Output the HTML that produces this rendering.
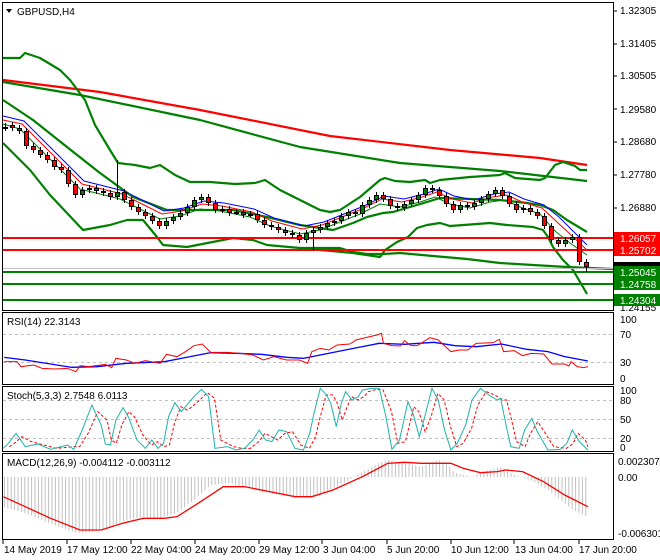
<!DOCTYPE html>
<html><head><meta charset="utf-8">
<style>
html,body{margin:0;padding:0;background:#fff;}
svg{display:block;font-family:"Liberation Sans",sans-serif;font-size:10px;}
.ns{vector-effect:non-scaling-stroke;fill:none;}
</style></head>
<body>
<svg width="660" height="560" viewBox="0 0 660 560" xmlns="http://www.w3.org/2000/svg">
<defs>
<pattern id="vl" x="0.5" y="0" width="3.4" height="10" patternUnits="userSpaceOnUse">
<rect x="0" y="0" width="1" height="10" fill="#c0c0c0"/>
</pattern>
</defs>
<rect width="660" height="560" fill="#fff"/>
<g fill="none" stroke="#000" stroke-width="1">
<rect x="2.5" y="2.5" width="611" height="308"/>
<rect x="2.5" y="312.5" width="611" height="72"/>
<rect x="2.5" y="386.5" width="611" height="65"/>
<rect x="2.5" y="453.5" width="611" height="86"/>
</g>
<g fill="none" stroke-width="2.2" stroke-linejoin="round">
<polyline stroke="#ff0000" points="3,80 100,92 200,110 330,136 450,150 540,158 587,165"/>
<polyline stroke="#008000" points="3,82 80,95 200,120 300,147 400,163 500,171 587,181"/>
<polyline stroke="#008000" points="3,58 20,58 25,53 40,58 60,70 70,80 85,100 95,125 110,150 118,163 135,165 150,168 160,165 175,175 190,182 210,182 235,184 255,183 265,180 280,190 300,200 320,210 330,212 340,210 360,197 380,180 385,178 395,181 410,182 425,180 430,183 440,180 470,177 500,175 505,173 515,178 540,180 545,178 555,165 563,162 575,166 580,170 587,170"/>
<polyline stroke="#008000" points="3,100 33,120 67,147 100,173 133,197 167,210 200,210 233,210 267,217 300,225 320,228 333,230 353,223 367,217 383,213 393,212 410,207 427,202 440,198 500,200 527,203 540,205 553,210 567,220 587,232"/>
<polyline stroke="#008000" points="3,143 30,170 50,195 83,230 110,225 127,220 143,220 157,237 163,245 187,247 233,238 253,240 267,245 300,248 353,253 380,257 385,250 397,242 408,237 417,228 427,225 440,223 450,226 477,224 490,223 507,225 533,227 543,230 548,237 553,247 563,260 573,270 583,287 587,294"/>
<polyline stroke="#008000" points="300,248 340,248 353,252 367,254 383,254 400,253 433,256 467,259 500,263 533,265 567,267 613,269"/>
</g>
<line x1="3" y1="268.5" x2="613" y2="268.5" stroke="#c0c0c0" stroke-width="1"/>
<g stroke-width="2">
<line x1="3" y1="238" x2="613" y2="238" stroke="#ff0000"/>
<line x1="3" y1="250" x2="613" y2="250" stroke="#ff0000"/>
<line x1="3" y1="272" x2="613" y2="272" stroke="#008000"/>
<line x1="3" y1="284" x2="613" y2="284" stroke="#008000"/>
<line x1="3" y1="300" x2="613" y2="300" stroke="#008000"/>
</g>
<!-- thin MAs -->
<g fill="none" stroke-width="1">
<polyline stroke="#008000" points="3,124 20,129 40,149 60,169 80,189 100,194 120,199 140,209 160,219 180,216 200,209 220,211 250,217 270,226 300,234 320,230 340,222 360,214 380,204 400,207 420,202 435,197 450,204 470,208 490,202 505,200 520,207 540,214 555,231 570,243 587,255"/>
<polyline stroke="#ff0000" points="3,120 22,124 42,144 62,164 82,184 102,189 122,194 142,204 162,214 182,211 202,204 222,206 252,212 272,221 302,229 322,225 342,217 362,209 382,199 402,202 422,197 437,192 452,199 472,203 492,197 507,195 522,202 542,208 557,222 572,236 587,250"/>
<polyline stroke="#0000ff" points="3,116 24,121 44,141 64,161 84,181 104,186 124,191 144,201 164,211 184,208 204,201 224,203 254,209 274,218 304,226 324,222 344,214 364,206 384,196 404,199 424,194 439,189 454,196 474,200 494,194 509,192 524,199 544,205 559,217 574,232 587,245"/>
</g>
<!-- candles -->
<path fill="none" stroke="#000" stroke-width="1" d="M5.5,123V131M12.5,122V131M19.5,125V134M26.5,128V149M33.5,143V153M40.5,147V158M47.5,152V163M54.5,157V170M61.5,164V173M68.5,167V187M75.5,181V198M82.5,187V198M89.5,185V193M96.5,185V194M103.5,188V196M110.5,190V200M117.5,160V200M124.5,189V203M131.5,197V210M138.5,204V215M145.5,209V219M152.5,213V224M159.5,218V229M166.5,218V229M173.5,214V224M180.5,210V220M187.5,204V216M194.5,197V210M201.5,194V203M208.5,194V206M215.5,200V213M222.5,206V213M229.5,206V216M236.5,209V215M243.5,209V218M250.5,211V217M257.5,211V223M264.5,217V228M271.5,222V230M278.5,224V233M285.5,227V236M292.5,230V238M299.5,232V243M306.5,230V243M313.5,227V250M320.5,224V233M327.5,220V230M334.5,218V226M341.5,213V224M348.5,209V219M355.5,209V217M362.5,202V217M369.5,197V208M376.5,192V203M383.5,192V202M390.5,196V209M397.5,203V211M404.5,201V211M411.5,197V207M418.5,192V203M425.5,185V198M432.5,185V193M439.5,187V199M446.5,193V207M453.5,201V213M460.5,202V213M467.5,202V210M474.5,200V210M481.5,196V206M488.5,191V202M495.5,187V197M502.5,187V199M509.5,193V207M516.5,201V213M523.5,205V213M530.5,205V215M537.5,209V219M544.5,213V229M551.5,223V243M558.5,237V247M565.5,237V247M572.5,234V243M579.5,234V265M586.5,259V272"/>
<path fill="none" stroke="#000" stroke-width="5" d="M5.5,127V129M12.5,125V128M19.5,128V131M26.5,131V146M33.5,146V150M40.5,150V155M47.5,155V160M54.5,160V167M61.5,167V170M68.5,170V184M75.5,184V195M82.5,190V195M89.5,188V190M96.5,188V191M103.5,191V193M110.5,193V197M117.5,192V197M124.5,192V200M131.5,200V207M138.5,207V212M145.5,212V216M152.5,216V221M159.5,221V226M166.5,221V226M173.5,217V221M180.5,213V217M187.5,207V213M194.5,200V207M201.5,197V200M208.5,197V203M215.5,203V210M222.5,209V211M229.5,209V213M236.5,212V214M243.5,212V215M250.5,214V216M257.5,214V220M264.5,220V225M271.5,225V227M278.5,227V230M285.5,230V233M292.5,233V235M299.5,235V240M306.5,233V240M313.5,230V233M320.5,227V230M327.5,223V227M334.5,221V223M341.5,216V221M348.5,212V216M355.5,212V214M362.5,205V214M369.5,200V205M376.5,195V200M383.5,195V199M390.5,199V206M397.5,206V208M404.5,204V208M411.5,200V204M418.5,195V200M425.5,188V195M432.5,188V190M439.5,190V196M446.5,196V204M453.5,204V210M460.5,205V210M467.5,205V207M474.5,203V207M481.5,199V203M488.5,194V199M495.5,190V194M502.5,190V196M509.5,196V204M516.5,204V210M523.5,208V210M530.5,208V212M537.5,212V216M544.5,216V226M551.5,226V240M558.5,240V244M565.5,240V244M572.5,237V240M579.5,237V262M586.5,262V267"/>
<path fill="none" stroke="#ff0000" stroke-width="3" d="M12.5,126V127M19.5,129V130M26.5,132V145M33.5,147V149M40.5,151V154M47.5,156V159M54.5,161V166M61.5,168V169M68.5,171V183M75.5,185V194M96.5,189V190M103.5,192V192M110.5,194V196M124.5,193V199M131.5,201V206M138.5,208V211M145.5,213V215M152.5,217V220M159.5,222V225M208.5,198V202M215.5,204V209M229.5,210V212M243.5,213V214M257.5,215V219M264.5,221V224M271.5,226V226M278.5,228V229M285.5,231V232M292.5,234V234M299.5,236V239M355.5,213V213M383.5,196V198M390.5,200V205M397.5,207V207M432.5,189V189M439.5,191V195M446.5,197V203M453.5,205V209M467.5,206V206M502.5,191V195M509.5,197V203M516.5,205V209M530.5,209V211M537.5,213V215M544.5,217V225M551.5,227V239M558.5,241V243M579.5,238V261M586.5,263V266"/>
<path fill="none" stroke="#008000" stroke-width="3" d="M5.5,128V128M82.5,191V194M89.5,189V189M117.5,193V196M166.5,222V225M173.5,218V220M180.5,214V216M187.5,208V212M194.5,201V206M201.5,198V199M222.5,210V210M236.5,213V213M250.5,215V215M306.5,234V239M313.5,231V232M320.5,228V229M327.5,224V226M334.5,222V222M341.5,217V220M348.5,213V215M362.5,206V213M369.5,201V204M376.5,196V199M404.5,205V207M411.5,201V203M418.5,196V199M425.5,189V194M460.5,206V209M474.5,204V206M481.5,200V202M488.5,195V198M495.5,191V193M523.5,209V209M565.5,241V243M572.5,238V239"/>
<!-- title -->
<path d="M6,9 L12,9 L9,13 Z" fill="#000"/>
<text x="17" y="15" fill="#000">GBPUSD,H4</text>
<g fill="#000">
<text x="620" y="14">1.32305</text>
<text x="620" y="47">1.31405</text>
<text x="620" y="79">1.30505</text>
<text x="620" y="113">1.29580</text>
<text x="620" y="145">1.28680</text>
<text x="620" y="178">1.27780</text>
<text x="620" y="211">1.26880</text>
<text x="620" y="311">1.24155</text>
</g>
<g stroke="#000"><line x1="613" y1="11" x2="617" y2="11"/><line x1="613" y1="44" x2="617" y2="44"/><line x1="613" y1="76" x2="617" y2="76"/><line x1="613" y1="109" x2="617" y2="109"/><line x1="613" y1="142" x2="617" y2="142"/><line x1="613" y1="175" x2="617" y2="175"/><line x1="613" y1="208" x2="617" y2="208"/></g>
<rect x="614" y="262" width="46" height="8" fill="#000"/>
<rect x="614" y="232" width="46" height="12" fill="#ff0000"/>
<rect x="614" y="244" width="46" height="12" fill="#ff0000"/>
<rect x="614" y="266" width="46" height="12" fill="#008000"/>
<rect x="614" y="278" width="46" height="12" fill="#008000"/>
<rect x="614" y="294" width="46" height="12" fill="#008000"/>
<g fill="#fff">
<text x="620" y="242">1.26057</text>
<text x="620" y="254">1.25702</text>
<text x="620" y="276">1.25045</text>
<text x="620" y="288">1.24758</text>
<text x="620" y="304">1.24304</text>
</g>
<!-- RSI -->
<g stroke="#c0c0c0" stroke-dasharray="3,3"><line x1="3" y1="334.5" x2="613" y2="334.5"/><line x1="3" y1="362.5" x2="613" y2="362.5"/></g>
<text x="7" y="325">RSI(14) 22.3143</text>
<g fill="#000"><text x="620" y="323">100</text><text x="620" y="338">70</text><text x="620" y="366">30</text><text x="620" y="382">0</text></g>
<g transform="translate(0,300) scale(0.42141,0.33333)">
<polyline class="ns" stroke="#0000ff" stroke-width="1.3" points="10,172 60,180 120,192 170,202 230,200 300,190 390,185 430,175 500,158 560,160 620,163 680,172 720,175 760,165 800,155 860,140 900,130 960,133 1030,127 1080,137 1130,140 1190,132 1250,148 1300,155 1340,170 1395,183"/>
<polyline class="ns" stroke="#ff0000" stroke-width="1" points="10,185 40,185 50,200 80,195 100,205 130,207 160,205 180,215 190,197 210,200 240,195 250,193 265,203 275,175 300,180 320,190 345,182 380,190 395,163 420,170 440,155 460,137 480,132 500,157 540,157 570,160 600,165 625,180 650,170 680,180 710,180 730,190 740,155 760,145 780,150 800,135 830,132 845,120 870,112 895,105 905,100 910,130 930,137 950,138 960,122 975,137 990,137 1020,113 1040,120 1070,155 1090,150 1110,150 1130,130 1170,128 1185,118 1195,155 1220,152 1240,167 1260,160 1290,162 1310,192 1340,192 1350,198 1355,185 1370,200 1385,203 1395,200"/>
</g>
<!-- Stoch -->
<g stroke="#c0c0c0" stroke-dasharray="3,3"><line x1="3" y1="400.5" x2="613" y2="400.5"/><line x1="3" y1="419.5" x2="613" y2="419.5"/><line x1="3" y1="438.5" x2="613" y2="438.5"/></g>
<text x="7" y="399">Stoch(5,3,3) 2.7548 6.0113</text>
<g fill="#000"><text x="620" y="394">100</text><text x="620" y="404">80</text><text x="620" y="423">50</text><text x="620" y="442">20</text><text x="620" y="451">0</text></g>
<g transform="translate(0,300) scale(0.42141,0.33333)">
<polyline class="ns" stroke="#ff0000" stroke-width="1" stroke-dasharray="3,2" points="22,440 34,430 52,410 74,425 104,435 134,445 174,440 189,440 209,400 232,335 254,360 264,420 276,430 289,375 306,335 319,350 339,405 359,435 374,425 389,440 402,435 414,370 429,320 444,330 454,322 474,300 492,278 509,295 524,420 554,440 574,445 594,445 614,425 629,400 644,410 659,420 676,400 694,395 714,435 734,445 749,410 759,355 774,285 789,285 799,305 812,360 824,320 834,290 849,300 864,290 874,275 894,268 909,270 929,335 944,430 962,425 982,320 994,335 1009,395 1024,345 1039,280 1054,300 1069,380 1084,440 1099,430 1119,385 1134,315 1154,275 1174,285 1194,300 1202,300 1214,360 1226,425 1246,440 1259,400 1276,365 1289,390 1314,440 1344,445 1359,432 1372,400 1389,420 1395,440"/>
<polyline class="ns" stroke="#20b2aa" stroke-width="1" points="8,445 20,430 38,400 60,440 90,432 120,448 160,435 175,448 195,390 218,315 240,375 250,432 262,435 275,360 292,323 305,352 325,420 345,445 360,420 375,445 388,430 400,350 415,308 430,335 440,320 460,290 478,268 495,290 510,445 540,440 560,450 580,445 600,420 615,390 630,420 645,425 662,390 680,395 700,445 720,450 735,400 745,340 760,265 775,285 785,310 798,380 810,310 820,275 835,300 850,290 860,270 880,265 900,265 915,345 930,448 948,420 968,305 980,340 995,410 1010,340 1025,265 1040,300 1055,390 1070,450 1085,430 1105,375 1120,300 1140,265 1160,285 1180,300 1188,295 1200,370 1212,440 1232,445 1245,390 1262,355 1275,395 1300,450 1330,448 1345,430 1358,390 1375,425 1395,450"/>
</g>
<!-- MACD -->
<polygon fill="url(#vl)" points="4,477 4,507 25,513 42,520 59,527 76,533 93,532 110,527 126,520 143,517 160,518 177,513 194,500 211,485 228,483 244,487 261,492 278,495 295,497 312,497 329,490 346,482 362,472 379,463 388,460 405,463 421,467 438,460 447,463 455,473 472,477 489,470 501,467 514,475 531,480 548,490 561,500 573,510 588,517 588,477"/>
<text x="7" y="466">MACD(12,26,9) -0.004112 -0.003112</text>
<g fill="#000"><text x="618" y="465">0.002307</text><text x="618" y="481">0.00</text><text x="618" y="537">-0.006301</text></g>
<g transform="translate(0,300) scale(0.42141,0.33333)">
<polyline class="ns" stroke="#ff0000" stroke-width="1.3" points="8,590 60,620 120,655 190,690 240,690 290,670 340,655 390,655 420,650 470,610 530,560 580,560 640,575 700,590 740,590 790,570 860,530 920,490 960,487 1000,490 1070,490 1100,505 1140,518 1180,515 1200,510 1240,515 1290,545 1340,585 1395,620"/>
</g>
<g stroke="#000"><line x1="3" y1="540" x2="3" y2="544"/><line x1="67" y1="540" x2="67" y2="544"/><line x1="131" y1="540" x2="131" y2="544"/><line x1="195" y1="540" x2="195" y2="544"/><line x1="259" y1="540" x2="259" y2="544"/><line x1="322" y1="540" x2="322" y2="544"/><line x1="387" y1="540" x2="387" y2="544"/><line x1="451" y1="540" x2="451" y2="544"/><line x1="514" y1="540" x2="514" y2="544"/><line x1="579" y1="540" x2="579" y2="544"/></g>
<g fill="#000">
<text x="4" y="553">14 May 2019</text><text x="67" y="553">17 May 12:00</text><text x="131" y="553">22 May 04:00</text><text x="195" y="553">24 May 20:00</text><text x="259" y="553">29 May 12:00</text><text x="323" y="553">3 Jun 04:00</text><text x="387" y="553">5 Jun 20:00</text><text x="451" y="553">10 Jun 12:00</text><text x="515" y="553">13 Jun 04:00</text><text x="579" y="553">17 Jun 20:00</text>
</g>
</svg>
</body></html>
